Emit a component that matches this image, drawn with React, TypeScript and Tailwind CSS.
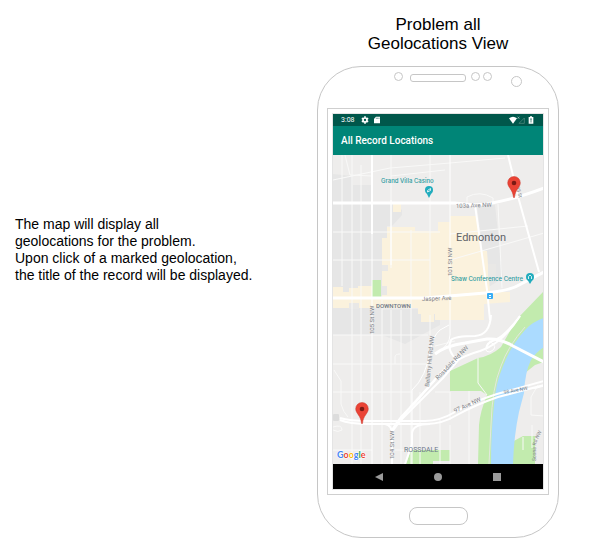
import React from "react";

const minorRoads = [
  "M342 155V286",
  "M352 155V464",
  "M361 165V464",
  "M391 155V268",
  "M391 310V430",
  "M411 230V464",
  "M430 155V298",
  "M430 315V335",
  "M382 300V464",
  "M401 310V464",
  "M333 232H440",
  "M333 260H430",
  "M333 335H428",
  "M333 364H428",
  "M333 392H412",
  "M333 180L390 168L450 163L505 158",
  "M345 155L350 175L372 176",
  "M391 176L445 170",
  "M467 204V197Q480 190 493 198V202",
  "M450 260L520 240L544 233",
  "M450 234L528 226",
  "M498 204L502 288",
  "M435 346L455 341",
  "M435 392H450V420",
  "M469 391V464",
  "M420 392V464",
  "M440 420V464",
  "M450 425V464",
  "M390 450H412",
  "M333 450H372",
  "M334 370L341 381V404Q343 412 348 417",
  "M333 427Q342 424 342 430Q338 433 333 430",
  "M478 358L478 383L487 395",
  "M538 385L531 397V415L544 416",
  "M532 425L532 448",
  "M523 437V450",
  "M395 364V357Q395 354 400 354",
];

const roads: { d: string; w: number }[] = [
  { d: "M372 155V464", w: 1 },
  { d: "M372 155V234", w: 2 },
  { d: "M391 200V265", w: 1 },
  { d: "M450 155V335Q450 345 436 354", w: 1 },
  { d: "M333 203H455L475 205Q505 203 544 188", w: 3 },
  { d: "M333 298H425L485 293Q510 291 521 284L544 272", w: 3 },
  { d: "M475 205L487 290L490 320", w: 2 },
  { d: "M508 155L519 200L539 272", w: 2 },
  { d: "M392 464V432L411 406L435 380", w: 2 },
  { d: "M412 464V390Q426 378 431 348Q433 336 440 330L449 325", w: 1 },
  { d: "M392 430Q400 416 414 404L438 376Q452 359 480 351Q502 344 520 316", w: 2 },
  { d: "M395 426L443 378L460 358", w: 2 },
  { d: "M435 354Q445 346 465 343L487 339Q500 338 513 346L544 362", w: 3 },
  { d: "M457 360Q446 350 451 340Q455 336 475 336Q490 335 491 315", w: 2 },
  { d: "M486 349Q487 342 495 340Q505 336 520 316", w: 2 },
  { d: "M489 341Q500 347 490 352Q482 352 489 343", w: 1 },
  { d: "M340 418Q349 421 370 421H425Q440 421 455 412Q475 401 497 394L544 381", w: 2 },
  { d: "M340 420Q349 424 370 424H427Q442 424 457 415Q475 405 498 397L544 385", w: 2 },
  { d: "M385 424Q392 425 392 434", w: 2 },
  { d: "M430 424Q412 424 412 434V444L405 464", w: 2 },
  { d: "M528 389Q536 389 544 386", w: 1 },
];

function CityMap() {
  return (
    <svg
      viewBox="333 155 211 309"
      preserveAspectRatio="xMinYMid slice"
      className="block h-full w-full"
      role="img"
      aria-label="Map of Edmonton"
      fontFamily="Roboto, sans-serif"
    >
      <defs>
        <path id="scona-road" d="M536 461V447Q536 443 538 439L544 427" />
      </defs>
      <rect x="333" y="155" width="211" height="309" fill="#eeedec" />
      <g fill="#e6e6e6">
        <path d="M333 174L353 176V185H372V203H372V335H333Z" />
        <path d="M372 203H391L402 210V215L392 226H387V238H382V310L440 308V325L405 344L382 335H372Z" />
        <path d="M477 205L495 205L503 278L487 288Z" />
      </g>
      <g fill="#fbf2dd">
        <path d="M333 287H343V292H349V288H358V286H372V297H382V238H387V227H415V231H438V222H450V216H477L480 250L487 251L490 292H510V302L484 304V320H435V314H418V308H333Z" />
        <path d="M393 204H401V212H393Z" />
        <path d="M421 312H434V322H421Z" />
        <path d="M471 315H480V319H471Z" />
      </g>
      <g fill="#e9e8e6">
        <rect x="382" y="265" width="6" height="6" />
        <rect x="382" y="286" width="5" height="9" />
        <rect x="349" y="303" width="10" height="6" />
        <rect x="488" y="264" width="8" height="13" />
      </g>
      <g fill="#c2ebae">
        <path d="M372 280H381V297H372Z" />
        <path d="M544 291L518 318Q508 334 501 347Q491 356 478 358L450 371V391H481L487 395Q480 412 479 425L478 464H500L544 360Z" />
      </g>
      <path d="M544 362L535 365L520 377L510 464H544Z" fill="#eeedec" />
      <g fill="#c2ebae">
        <path d="M512 442L523 436H535V464H510Z" />
        <path d="M406 464L411 450H450V461H433V464Z" />
      </g>
      <path
        d="M544 318Q532 322 525 330Q510 347 503 366Q495 385 494 405Q491 430 491 464H513Q514 435 519 412L524 393Q525 372 531 360Q536 352 544 347Z"
        fill="#abdbff"
      />
      <path d="M525 327Q508 346 501 366Q492 388 491 425L489 464" fill="none" stroke="#e3e8df" strokeWidth="1" />
      <g fill="none" stroke="#f9f9f8" strokeWidth="1">
        {minorRoads.map((d) => (
          <path key={d} d={d} />
        ))}
      </g>
      <g fill="none" stroke="#ffffff" strokeLinejoin="round">
        {roads.map((road) => (
          <path key={road.d} d={road.d} strokeWidth={road.w} />
        ))}
      </g>
      <rect x="333" y="414" width="6" height="7" rx="1" fill="#dcdcdc" />

      <g fontSize="6" fill="#7d8187">
        <text transform="translate(456 208) rotate(-2)">103a Ave NW</text>
        <text transform="translate(422 301) rotate(-2)">Jasper Ave</text>
        <text transform="translate(452 276) rotate(-90)">101 St NW</text>
        <text transform="translate(374 334) rotate(-90)">105 St NW</text>
        <text transform="translate(394 459) rotate(-90)">104 St NW</text>
        <text transform="translate(429 387) rotate(-84)">Bellamy Hill Rd NW</text>
        <text transform="translate(438 380) rotate(-46)">Rossdale Rd NW</text>
        <text transform="translate(455 413) rotate(-25)">97 Ave NW</text>
        <text transform="translate(504 394) rotate(-10)" fontSize="5">98 Ave NW</text>
        <text fontSize="5">
          <textPath href="#scona-road">Scona Rd NW</textPath>
        </text>
        <text transform="translate(516 187) rotate(75)" fontSize="5">95 St</text>
      </g>
      <text x="456" y="241" fontSize="11" fill="#5f6368">Edmonton</text>
      <g fill="#6b7689">
        <text x="376" y="308" fontSize="6" fontWeight="500">DOWNTOWN</text>
        <text x="404" y="452" fontSize="7">ROSSDALE</text>
      </g>
      <g fontFamily="Inter, sans-serif" fontSize="6" fontWeight="500" fill="#2b9aa0">
        <text x="381" y="183">Grand Villa Casino</text>
        <text x="451" y="281">Shaw Conference Centre</text>
      </g>
      <g fill="#21acbd">
        <circle cx="429" cy="190" r="4" />
        <path d="M426 192H432L429 198Z" />
        <circle cx="530" cy="277" r="4" />
        <path d="M527 279H533L530 284Z" />
      </g>
      <g fill="none" stroke="#ffffff" strokeWidth=".8">
        <path d="M427.500 190.500L430.500 188.500V190.500L427.500 192Z" />
        <path d="M528.500 279V276.500L530 275L531.500 276.500V279" />
      </g>
      <rect x="487" y="293" width="6" height="6" rx="1" fill="#38adf5" />
      <path d="M489 295.500H491M489 297.500H491" stroke="#ffffff" />

      <text
        x="337"
        y="458"
        fontFamily="Lato, sans-serif"
        fontSize="9"
        fontWeight="700"
        stroke="#ffffff"
        strokeWidth="1"
        paintOrder="stroke"
      >
        <tspan fill="#4285f4">G</tspan>
        <tspan fill="#ea4335">o</tspan>
        <tspan fill="#fbbc05">o</tspan>
        <tspan fill="#4285f4">g</tspan>
        <tspan fill="#34a853">l</tspan>
        <tspan fill="#ea4335">e</tspan>
      </text>
    </svg>
  );
}

function Pin({ place, label }: { place: string; label: string }) {
  return (
    <button
      type="button"
      aria-label={label}
      className={`absolute block -translate-x-1/2 -translate-y-full ${place}`}
    >
      <svg viewBox="0 0 14 22" className="block h-[22px] w-[14px]">
        <path
          d="M7 .5A6.300 6.300 0 0 0 .7 6.800C.7 11.600 6 13.500 6.500 21.500H7.500C8 13.500 13.300 11.600 13.300 6.800A6.300 6.300 0 0 0 7 .5Z"
          fill="#ea4335"
          stroke="#c9382c"
          strokeWidth=".5"
        />
        <circle cx="7" cy="7" r="2.300" fill="#7b1a14" />
      </svg>
    </button>
  );
}

function StatusBar() {
  return (
    <div className="flex h-3 items-center bg-[#00574b] px-2 text-white">
      <span className="w-5 text-[7px] leading-3">3:08</span>
      <svg viewBox="0 0 24 24" className="h-2 w-2" aria-hidden="true">
        <circle cx="12" cy="12" r="6" fill="none" stroke="currentColor" strokeWidth="5" />
        <path
          d="M12 1V5M12 19V23M2.500 6.500L6 8.500M18 15.500L21.500 17.500M2.500 17.500L6 15.500M18 8.500L21.500 6.500"
          stroke="currentColor"
          strokeWidth="5"
        />
      </svg>
      <svg viewBox="0 0 24 24" className="ml-1 h-2 w-2" aria-hidden="true">
        <path d="M9 2H21V22H3V8Z" fill="currentColor" />
        <path d="M10 5V9M14 5V9M18 5V9" stroke="#00574b" strokeWidth="1.500" />
      </svg>
      <svg viewBox="0 0 24 24" className="ml-auto h-2 w-2" aria-hidden="true">
        <path d="M12 23L0 7Q12 -3 24 7Z" fill="currentColor" />
      </svg>
      <svg viewBox="0 0 24 24" className="h-2 w-2" aria-hidden="true">
        <path d="M22 6V22H6Z" fill="none" stroke="#5c9188" strokeWidth="2" />
        <path d="M2 2L7 8M7 2L2 8" stroke="#a9c8c3" strokeWidth="2" />
      </svg>
      <svg viewBox="0 0 24 24" className="ml-[2px] h-2 w-2" aria-hidden="true">
        <path d="M9 1H15V3H19V23H5V3H9Z" fill="currentColor" />
        <path d="M12 7V14M12 16V19" stroke="#00574b" strokeWidth="3" />
      </svg>
    </div>
  );
}

function Phone() {
  return (
    <section
      aria-label="Phone"
      className="flex w-[242px] flex-col rounded-[44px] border border-[#c6c6c6] px-[9px] pb-3"
    >
      <div className="flex h-[41px] items-start pr-[27px] pl-[67px] pt-[5px]">
        <span className="h-[9px] w-[9px] rounded-full border border-[#c6c6c6]" />
        <span className="mt-[2px] ml-[7px] h-2 w-[56px] rounded-[3px] border border-[#c6c6c6]" />
        <span className="ml-[5px] h-[9px] w-[9px] rounded-full border border-[#c6c6c6]" />
        <span className="ml-[3px] h-[9px] w-[9px] rounded-full border border-[#c6c6c6]" />
        <span className="mt-1 ml-auto h-[11px] w-[11px] rounded-full border border-[#c6c6c6]" />
      </div>

      <div className="border border-[#cfcfcf] bg-white p-1">
        <div className="border border-[#e4e4e4] font-[Roboto,sans-serif]">
          <StatusBar />
          <header className="flex h-[29px] items-center bg-[#008577] px-2">
            <h2 className="text-[10px] leading-4 font-medium text-white">All Record Locations</h2>
          </header>
          <div className="relative h-[309px] overflow-hidden">
            <CityMap />
            <Pin place="left-[86%] top-[14%]" label="Record in the north east" />
            <Pin place="left-[14%] top-[87%]" label="Record in the south west" />
          </div>
          <nav className="flex h-[25px] items-center justify-between bg-black px-[42px] text-[#9b9b9b]">
            <button type="button" aria-label="Back">
              <svg viewBox="0 0 8 8" className="block h-2 w-2">
                <path d="M8 0V8L0 4Z" fill="currentColor" />
              </svg>
            </button>
            <button type="button" aria-label="Home" className="h-2 w-2 rounded-full bg-[#9b9b9b]" />
            <button type="button" aria-label="Recent apps" className="h-2 w-2 bg-[#9b9b9b]" />
          </nav>
        </div>
      </div>

      <span className="mx-auto mt-3 h-[18px] w-[59px] rounded-lg border border-[#c6c6c6]" />
    </section>
  );
}

export default function App() {
  return (
    <main className="flex min-h-screen items-start justify-between bg-white pr-[33px] pl-[15px] font-['Liberation_Sans',Arial,sans-serif] text-black">
      <p className="pt-[216px] text-[14px] leading-[17px] whitespace-nowrap">
        The map will display all
        <br />
        geolocations for the problem.
        <br />
        Upon click of a marked geolocation,
        <br />
        the title of the record will be displayed.
      </p>
      <div className="pt-[15px]">
        <h1 className="pb-[13px] text-center text-[17px] leading-[19px]">
          Problem all
          <br />
          Geolocations View
        </h1>
        <Phone />
      </div>
    </main>
  );
}
